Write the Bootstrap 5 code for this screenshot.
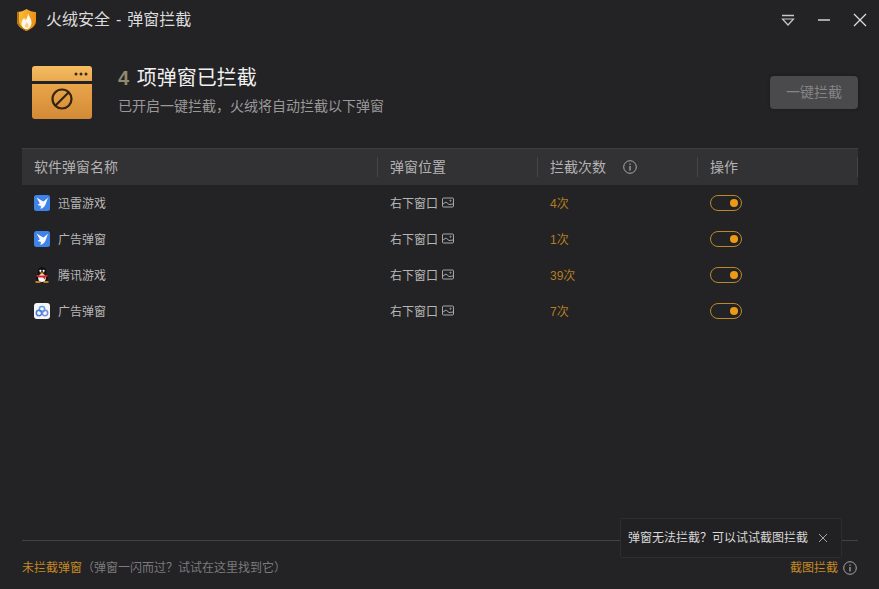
<!doctype html>
<html lang="zh-CN">
<head>
  <meta charset="UTF-8">
  <meta content="width=device-width, initial-scale=1" name="viewport">
  <link href="https://cdn.jsdelivr.net/npm/bootstrap@5.3.0/dist/css/bootstrap.min.css" rel="stylesheet">
  <script src="https://cdn.jsdelivr.net/npm/bootstrap@5.3.0/dist/js/bootstrap.bundle.min.js"></script>
  <title>火绒安全 - 弹窗拦截</title>
  <style>
    html, body { height: 100%; }
    body { background: #232224; color: #c4c3c4; font-family: "Liberation Sans", "Noto Sans CJK SC", sans-serif; font-size: 12px; overflow: hidden; }
    .app-frame { height: 589px; position: relative; }
    .title-bar { height: 40px; padding: 0 12px 0 17px; }
    .title-text { font-size: 16px; color: #dcdcdc; margin-left: 10px; word-spacing: 1.5px; }
    .win-btns { gap: 22px; }
    .hero { height: 108px; padding: 0 21px 0 32px; }
    .hero-art { margin-top: -3px; }
    .hero-title { font-size: 20px; line-height: 24px; color: #f0f0f0; margin: 0 0 7px; font-weight: 400; }
    .hero-num { color: #8f8b6f; margin-right: 2px; font-weight: 700; }
    .hero-sub { font-size: 14px; line-height: 18px; color: #9a999a; margin: 0; }
    .hero-copy { margin: -8px 0 0 26px; }
    .block-btn { width: 88px; height: 33px; border: 0; border-radius: 4px; font-size: 14px; padding: 0; margin-top: -4px; box-shadow: 0 0 3px #18181a; }
    .block-btn:disabled { background: #4a494b; color: #858486; opacity: 1; }
    .list-wrap { padding: 0 21px 0 22px; flex: 1 1 auto; }
    .pop-table { table-layout: fixed; width: 836px; margin: 0; --bs-table-bg: transparent; --bs-table-color: #b8b7b8; color: #b8b7b8; }
    .pop-table th { height: 36px; background: #323133; border-top: 1px solid #3f3e40; font-size: 14px; font-weight: 400; color: #b4b3b4; padding: 2px 12px 0; vertical-align: middle; position: relative; }
    .pop-table th::after { content: ""; position: absolute; right: 0; top: 8px; bottom: 8px; border-right: 1px solid #454446; }
    .pop-table td { height: 36px; padding: 0 12px; vertical-align: middle; border: 0; background: transparent; color: #b8b7b8; }
    .pop-table td.count-text { color: #b27f22; padding-top: 2px; }
    .row-text { padding-top: 2px; }
    .col-name { width: 356px; }
    .col-spot { width: 160px; }
    .col-count { width: 160px; }
    .app-icon { width: 16px; height: 16px; margin-right: 8px; flex: none; }
    .head-info { margin-left: 17px; margin-top: -2px; }
    .toggle-pill { display: block; width: 32px; height: 16px; border: 1px solid #b98a2c; border-radius: 8px; position: relative; }
    .toggle-dot { position: absolute; right: 3px; top: 3px; width: 8px; height: 8px; background: #ee9a14; border-radius: 50%; }
    .foot-bar { height: 49px; margin: 0 21px 0 22px; padding: 6px 1px 0 0; border-top: 1px solid #434244; color: #7c7b7c; }
    .foot-link { color: #c58a25; }
    .foot-info { margin-left: 5px; }
    .foot-tip { position: absolute; left: 620px; top: 518px; width: 222px; height: 40px; background: #212022; border: 1px solid #2e2d2f; border-radius: 2px; padding: 0 13px 0 7px; color: #d8d8d8; }
  </style>
</head>
<body>
  <div class="app-frame d-flex flex-column">
    <!-- title bar -->
    <div class="title-bar d-flex align-items-center justify-content-between">
      <div class="d-flex align-items-center">
        <svg width="19" height="22" viewBox="0 0 19 22">
          <defs>
            <linearGradient id="shieldGrad" x1="0" y1="0" x2="1" y2="0.2">
              <stop offset="0" stop-color="#f8c53c"/><stop offset="1" stop-color="#ef8f14"/>
            </linearGradient>
          </defs>
          <path d="M0 3 C3.500 3 6.500 2 9.500 0 C12.500 2 15.500 3 19 3 L19 12 C19 17 14 20 9.500 22 C5 20 0 17 0 12 Z" fill="url(#shieldGrad)"/>
          <path d="M0 3 L2 2.800 L2 12 C2 16 5 18.500 9.500 21 L9.500 22 C5 20 0 17 0 12 Z" fill="#b8720f"/>
          <path d="M11 4 C11.500 7 14.500 9.500 14.500 13.500 C14.500 17.500 12 20 9.500 20 C6.500 20 4.500 17.500 4.500 14.500 C4.500 12 6 10.500 7.200 8.500 C7.600 10 8 10.500 8.800 10.800 C10 9 11 7 11 4 Z" fill="#fff8ea"/>
          <path d="M9.800 13 C10.300 14.500 11.500 15.200 11.500 16.800 C11.500 18 10.700 18.800 9.700 18.800 C8.700 18.800 8 18 8 16.800 C8 15.300 9.300 14.700 9.800 13 Z" fill="#f6cf86"/>
        </svg>
        <span class="title-text">火绒安全 - 弹窗拦截</span>
      </div>
      <div class="win-btns d-flex align-items-center">
        <svg width="14" height="14" viewBox="0 0 14 14" fill="none" stroke="#c8c8c8">
          <path d="M1 2.500 H13" stroke-width="1.500"/><path d="M1.500 6 H12.500 L7 12 Z" stroke-width="1.200"/>
        </svg>
        <svg width="14" height="14" viewBox="0 0 14 14" fill="none" stroke="#c8c8c8"><path d="M1 7 H13" stroke-width="1.600"/></svg>
        <svg width="14" height="14" viewBox="0 0 14 14" fill="none" stroke="#dcdcdc"><path d="M1 1 L13 13 M13 1 L1 13" stroke-width="1.300"/></svg>
      </div>
    </div>

    <!-- summary -->
    <div class="hero d-flex align-items-center justify-content-between">
      <div class="d-flex align-items-center">
        <svg class="hero-art" width="60" height="53" viewBox="0 0 60 53">
          <defs>
            <linearGradient id="boxTop" x1="0" y1="0" x2="0" y2="1"><stop offset="0" stop-color="#f6bd62"/><stop offset="1" stop-color="#e9a94f"/></linearGradient>
            <linearGradient id="boxBody" x1="0" y1="0" x2="0" y2="1"><stop offset="0" stop-color="#e9a54a"/><stop offset="1" stop-color="#d38a36"/></linearGradient>
          </defs>
          <path d="M0 3 Q0 0 3 0 H57 Q60 0 60 3 V15 H0 Z" fill="url(#boxTop)"/>
          <path d="M0 18 H60 V50 Q60 53 57 53 H3 Q0 53 0 50 Z" fill="url(#boxBody)"/>
          <circle cx="44" cy="8" r="1.500" fill="#3a2a14"/><circle cx="49" cy="8" r="1.500" fill="#3a2a14"/><circle cx="54" cy="8" r="1.500" fill="#3a2a14"/>
          <circle cx="30" cy="33" r="9.500" fill="none" stroke="#33230f" stroke-width="2.200"/>
          <path d="M23.500 39.500 L36.500 26.500" stroke="#33230f" stroke-width="2.200"/>
        </svg>
        <div class="hero-copy">
          <h1 class="hero-title"><span class="hero-num">4</span> 项弹窗已拦截</h1>
          <p class="hero-sub">已开启一键拦截，火绒将自动拦截以下弹窗</p>
        </div>
      </div>
      <button class="btn block-btn" type="button" disabled>一键拦截</button>
    </div>

    <!-- list -->
    <div class="list-wrap">
      <table class="table table-borderless pop-table">
        <thead>
          <tr>
            <th class="col-name">软件弹窗名称</th>
            <th class="col-spot">弹窗位置</th>
            <th class="col-count">
              <div class="d-flex align-items-center">拦截次数
                <svg class="head-info" width="14" height="14" viewBox="0 0 14 14" fill="none" stroke="#a8a7a8"><circle cx="7" cy="7" r="6.300"/><path d="M7 6 V10.500 M7 3.500 V4.800" stroke-width="1.300"/></svg>
              </div>
            </th>
            <th>操作</th>
          </tr>
        </thead>
        <tbody id="rows"></tbody>
      </table>
    </div>

    <!-- footer -->
    <div class="foot-bar d-flex align-items-center justify-content-between">
      <div><span class="foot-link">未拦截弹窗</span>（弹窗一闪而过？试试在这里找到它）</div>
      <div class="d-flex align-items-center">
        <span class="foot-link">截图拦截</span>
        <svg class="foot-info" width="14" height="14" viewBox="0 0 14 14" fill="none" stroke="#a8a7a8"><circle cx="7" cy="7" r="6.300"/><path d="M7 6 V10.500 M7 3.500 V4.800" stroke-width="1.300"/></svg>
      </div>
    </div>

    <div class="foot-tip d-flex align-items-center justify-content-between">
      <span>弹窗无法拦截？可以试试截图拦截</span>
      <svg width="10" height="10" viewBox="0 0 10 10" fill="none" stroke="#a5a4a5"><path d="M1 1 L9 9 M9 1 L1 9"/></svg>
    </div>
  </div>

  <script>
    const birdIcon = '<svg class="app-icon" viewBox="0 0 16 16"><rect width="16" height="16" rx="2.500" fill="#3f82e8"/><path d="M2.500 2.500 L7.500 5.500 L9.500 6.500 L14 2.800 L11.500 9.500 C10.800 11.500 9 13 6.500 14 L7 11 L3.500 10 L5.800 8.300 Z" fill="#f6f9ff"/></svg>';
    const qqIcon = '<svg class="app-icon" viewBox="0 0 16 16"><ellipse cx="8" cy="4.800" rx="4.300" ry="4.800" fill="#111"/><ellipse cx="8" cy="10.500" rx="6" ry="5" fill="#111"/><ellipse cx="8" cy="11" rx="3.800" ry="4" fill="#f4f4f4"/><circle cx="6.400" cy="3.800" r="1.100" fill="#fff"/><circle cx="9.600" cy="3.800" r="1.100" fill="#fff"/><path d="M5.500 5.600 H10.500 L8 7.400 Z" fill="#f0a818"/><path d="M2.500 7.800 C5 8.800 11 8.800 13.500 7.800 V9.800 L11 10.200 V12.500 L8.800 10.500 C6.500 10.800 4 10.500 2.500 9.800 Z" fill="#d8232a"/><path d="M1.500 14.300 H6.500 V15.800 H1.500 Z M9.500 14.300 H14.500 V15.800 H9.500 Z" fill="#e9a020"/></svg>';
    const cloudIcon = '<svg class="app-icon" viewBox="0 0 16 16"><rect width="16" height="16" rx="3" fill="#f5f6f8"/><g fill="none" stroke-width="1.500"><circle cx="8" cy="6.200" r="2.700" stroke="#58a6e8"/><circle cx="5" cy="10" r="2.700" stroke="#4a78d8"/><circle cx="11" cy="10" r="2.700" stroke="#7a8be0"/></g></svg>';
    const picIcon = '<svg class="ms-1 row-pic" width="12" height="11" viewBox="0 0 12 11" fill="none" stroke="#a9a8a9"><rect x="0.500" y="1" width="11" height="9" rx="1"/><path d="M1 7 L4 5 L7 7.500 L11 7"/><circle cx="8.500" cy="3.700" r="0.600"/></svg>';

    const popups = [
      { icon: birdIcon, name: "迅雷游戏", count: "4次" },
      { icon: birdIcon, name: "广告弹窗", count: "1次" },
      { icon: qqIcon, name: "腾讯游戏", count: "39次" },
      { icon: cloudIcon, name: "广告弹窗", count: "7次" }
    ];

    document.getElementById("rows").innerHTML = popups.map(function(p) {
      return '<tr>' +
        '<td><div class="d-flex align-items-center">' + p.icon + '<span class="row-text">' + p.name + '</span></div></td>' +
        '<td><div class="d-flex align-items-center"><span class="row-text">右下窗口</span>' + picIcon + '</div></td>' +
        '<td class="count-text">' + p.count + '</td>' +
        '<td><span class="toggle-pill"><span class="toggle-dot"></span></span></td>' +
        '</tr>';
    }).join("");
  </script>
</body>
</html>
